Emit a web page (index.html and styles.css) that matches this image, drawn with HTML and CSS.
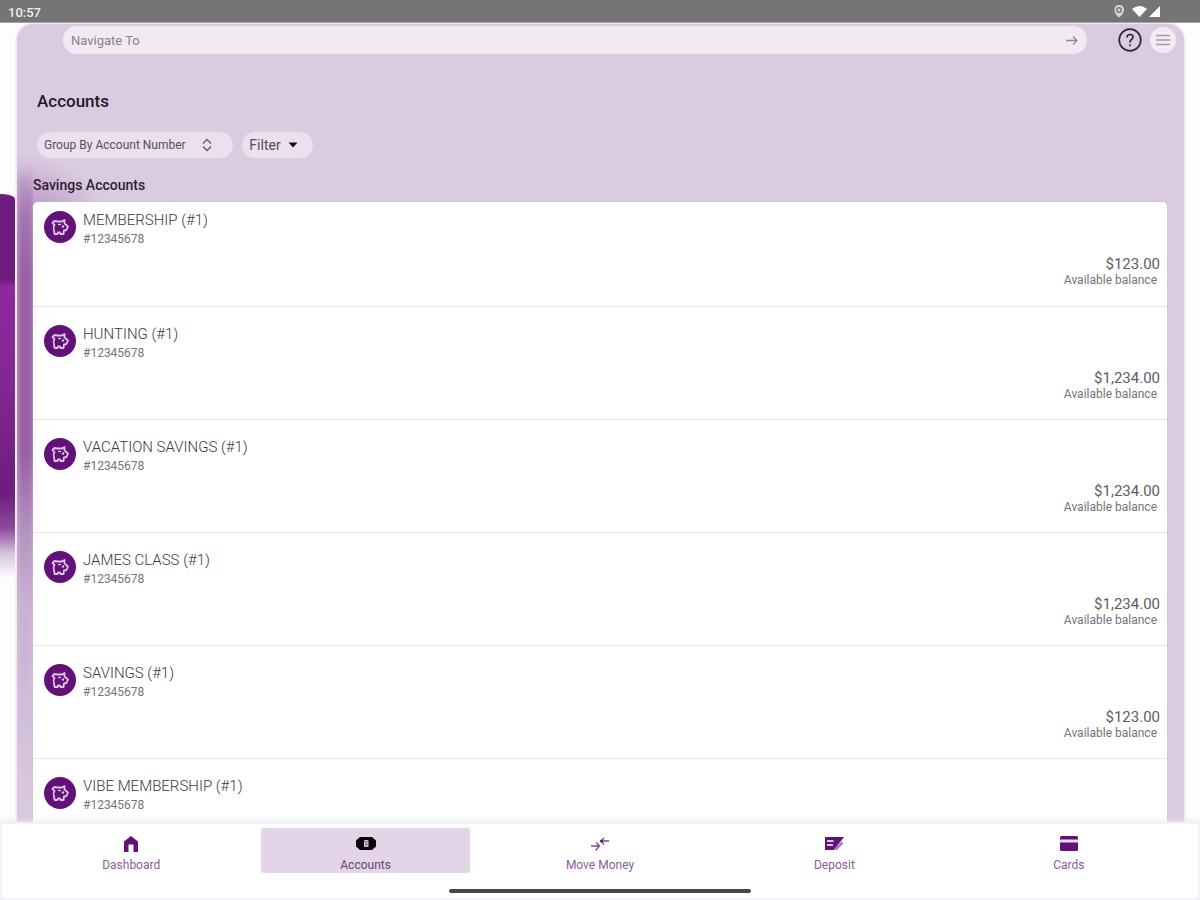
FILE: index.html
```html
<!DOCTYPE html>
<html lang="en">
<head>
<meta charset="utf-8">
<title>Accounts</title>
<link rel="stylesheet" href="styles.css">
</head>
<body>
<svg class="defs" width="0" height="0" aria-hidden="true">
  <symbol id="pig" viewBox="0 0 20 20"><path d="M2.500 6 L4.500 4 L7.500 4.500 L12 4.500 L14.500 3 L14.500 6.500 L18 9.500 L16.500 13 L14 13.500 L13.500 17 L10.500 17 L10 15.500 L8 15.500 L7.500 17 L4.500 17 L4 13 Q2.800 10.500 4.500 8 Z" fill="none" stroke="currentColor" stroke-width="1.800" stroke-linejoin="round"/><path d="M8 7.500 L11 7.500" stroke="currentColor" stroke-width="1.300"/><circle cx="13" cy="9.500" r="1.200" fill="currentColor"/></symbol>
</svg>
<header class="status">
  <time class="clock">10:57</time>
  <svg class="signals" viewBox="0 0 48 16" width="48" height="16" aria-hidden="true">
    <path d="M5 2 Q10 2 10 7 Q9.500 11 5 14.500 Q0.500 11 0.500 7 Q0.500 2 5 2Z" fill="#d6d6d6"/><circle cx="5" cy="7" r="2.200" fill="none" stroke="#777" stroke-width="1.400"/>
    <path d="M18 6 Q25.500 0 33 6 L25.500 14 Z" fill="#fff"/><path d="M35 14 L46 14 L46 3 Z" fill="#fff"/>
  </svg>
</header>
<main class="stage">
  <div class="backdrop"></div>
  <section class="panel">
    <div class="topbar">
      <form class="search">
        <input class="search-input" type="text" placeholder="Navigate To" aria-label="Navigate To">
        <button class="search-go" type="button" aria-label="Go"><svg viewBox="0 0 14 14" width="14" height="14"><path d="M1 7.500 H12 M8 3.500 L12 7.500 L8 11.500" fill="none" stroke="#8d8790" stroke-width="1.300"/></svg></button>
      </form>
      <button class="round" type="button" aria-label="Help"><svg viewBox="0 0 24 24" width="24" height="24"><circle cx="12" cy="12" r="10.800" fill="none" stroke="#33243c" stroke-width="1.700"/><path d="M9 9.500 Q9 6.500 12 6.500 Q15 6.500 15 9 Q15 10.500 13.500 11.500 Q12 12.500 12 14.500" fill="none" stroke="#33243c" stroke-width="1.600"/><circle cx="12" cy="17.300" r="1" fill="#33243c"/></svg></button>
      <button class="round menu" type="button" aria-label="Menu"><svg viewBox="0 0 16 12" width="16" height="12"><path d="M1 1.500 H15 M1 6 H15 M1 10.500 H15" stroke="#a39ca6" stroke-width="1.400"/></svg></button>
    </div>
    <h1 class="title">Accounts</h1>
    <div class="controls">
      <div class="group">
        <select class="group-select" aria-label="Group accounts"><option>Group By Account Number</option></select>
        <svg class="group-icon" viewBox="0 0 12 14" width="12" height="14" aria-hidden="true"><path d="M2 5.500 L6 1.500 L10 5.500 M2 8.500 L6 12.500 L10 8.500" fill="none" stroke="#66586c" stroke-width="1.400"/></svg>
      </div>
      <button class="filter" type="button">Filter <svg viewBox="0 0 10 6" width="10" height="6"><path d="M0.500 0.500 H9.500 L5 5.500 Z" fill="#150a1a"/></svg></button>
    </div>
    <h2 class="subtitle">Savings Accounts</h2>
    <ul class="accounts">
      <li class="account"><span class="badge"><svg width="20" height="20"><use href="#pig"/></svg></span><div class="info"><div class="name">MEMBERSHIP (#1)</div><div class="number">#12345678</div></div><div class="balance"><div class="amount">$123.00</div><div class="note">Available balance</div></div></li>
      <li class="account"><span class="badge"><svg width="20" height="20"><use href="#pig"/></svg></span><div class="info"><div class="name">HUNTING (#1)</div><div class="number">#12345678</div></div><div class="balance"><div class="amount">$1,234.00</div><div class="note">Available balance</div></div></li>
      <li class="account"><span class="badge"><svg width="20" height="20"><use href="#pig"/></svg></span><div class="info"><div class="name">VACATION SAVINGS (#1)</div><div class="number">#12345678</div></div><div class="balance"><div class="amount">$1,234.00</div><div class="note">Available balance</div></div></li>
      <li class="account"><span class="badge"><svg width="20" height="20"><use href="#pig"/></svg></span><div class="info"><div class="name">JAMES CLASS (#1)</div><div class="number">#12345678</div></div><div class="balance"><div class="amount">$1,234.00</div><div class="note">Available balance</div></div></li>
      <li class="account"><span class="badge"><svg width="20" height="20"><use href="#pig"/></svg></span><div class="info"><div class="name">SAVINGS (#1)</div><div class="number">#12345678</div></div><div class="balance"><div class="amount">$123.00</div><div class="note">Available balance</div></div></li>
      <li class="account"><span class="badge"><svg width="20" height="20"><use href="#pig"/></svg></span><div class="info"><div class="name">VIBE MEMBERSHIP (#1)</div><div class="number">#12345678</div></div></li>
    </ul>
  </section>
</main>
<footer class="footer">
  <nav class="tabs">
    <a class="tab" href="#dashboard"><svg viewBox="0 0 20 18" width="20" height="18"><path d="M10 1 L17 6.500 V17 H12.500 V9.500 H7.500 V17 H3 V6.500 Z" fill="currentColor"/></svg><span class="tab-label">Dashboard</span></a>
    <a class="tab active" href="#accounts" aria-current="page"><svg viewBox="0 0 20 18" width="20" height="18"><path d="M4 2 H16 L20 5.500 V11.500 L16 15 H4 L0 11.500 V5.500 Z" fill="#08040a"/><rect x="8" y="5" width="4.500" height="7" rx="1" fill="#c9bdcc"/><path d="M9 7 H11.500 M9 9.500 H11.500" stroke="#4a3f4d" stroke-width="0.800"/></svg><span class="tab-label">Accounts</span></a>
    <a class="tab" href="#move"><svg viewBox="0 0 20 18" width="20" height="18"><path d="M1 11 H9 M6 7.500 L9.500 11 L5.500 15.500" fill="none" stroke="#7b4b8b" stroke-width="1.300"/><path d="M19 6 H11 M14 3 L11 6 L14 9.500" fill="none" stroke="#7b4b8b" stroke-width="1.300"/><circle cx="11.500" cy="6" r="1.500" fill="currentColor"/></svg><span class="tab-label">Move Money</span></a>
    <a class="tab" href="#deposit"><svg viewBox="0 0 20 18" width="20" height="18"><path d="M1 2 H20 L10 15 H1 Z" fill="currentColor"/><path d="M3 6 H9.500 M3 10 H9" stroke="#fff" stroke-width="1.300"/><path d="M11.500 14.500 L18.500 7.500" stroke="#a680b1" stroke-width="2.600"/></svg><span class="tab-label">Deposit</span></a>
    <a class="tab" href="#cards"><svg viewBox="0 0 20 18" width="20" height="18"><rect x="1" y="1" width="18" height="15" rx="1.500" fill="currentColor"/><rect x="1" y="4.500" width="18" height="3" fill="#e9dbee"/></svg><span class="tab-label">Cards</span></a>
  </nav>
  <div class="handle"></div>
</footer>
</body>
</html>
```
FILE: styles.css
```css
* { box-sizing: border-box; }
body {
  margin: 0;
  height: 100vh;
  display: flex;
  flex-direction: column;
  overflow: hidden;
  background: #fdfcfe;
  color: #55505a;
  font-family: Roboto, "Liberation Sans", sans-serif;
}
button, input, select { font: inherit; color: inherit; border: 0; margin: 0; }
button { display: flex; align-items: center; justify-content: center; padding: 0; background: none; }
.defs { position: absolute; }
.status {
  flex: none;
  display: flex;
  align-items: center;
  justify-content: space-between;
  height: 23px;
  padding: 0 38px 0 8px;
  background: #757575;
  color: #eee;
  border-bottom: 1px solid #a5a3a6;
}
.clock { font-size: 13px; font-weight: 500; padding-top: 2px; }
.stage {
  position: relative;
  flex: 1;
  min-height: 0;
  overflow: hidden;
  padding: 1px 16px 0 17px;
}
.backdrop {
  position: absolute;
  left: 0;
  top: 171px;
  width: 15px;
  height: 384px;
  border-top-right-radius: 15px 5px;
  background: linear-gradient(#6d1d7d 0, #6d1d7d 86px, #8e289f 92px, #832792 190px, #6d1d7d 300px, #8b4a98 334px, #d8c5dd 360px, rgba(253, 252, 254, 0) 384px);
}
.panel {
  position: relative;
  border-radius: 16px 16px 0 0;
  padding: 2px 8px 0 16px;
  background: radial-gradient(ellipse 90px 70px at 0 200px, rgba(148, 91, 163, 0.6), rgba(148, 91, 163, 0)), #dacbe0;
  box-shadow: 0 0 3px #d5c8da;
}
.panel::before {
  content: "";
  position: absolute;
  left: 0;
  top: 140px;
  width: 16px;
  height: 660px;
  background: linear-gradient(90deg, rgba(218, 203, 224, 0.35), rgba(218, 203, 224, 0) 30%, rgba(218, 203, 224, 0) 70%, rgba(218, 203, 224, 0.15)), linear-gradient(rgba(148, 91, 163, 0) 0, #a273af 60px, #9860a6 110px, #9860a6 290px, #b594c0 370px, #c9b0d1 440px, #d0bad8 520px, #d9c9df 640px);
}
.topbar { display: flex; align-items: center; padding-left: 30px; }
.search {
  flex: 1;
  display: flex;
  align-items: center;
  height: 28px;
  padding: 0 8px;
  margin-right: 30px;
  border-radius: 14px;
  background: #f0ebf2;
}
.search-input { flex: 1; padding: 0; background: none; font-size: 13px; outline: 0; }
.search-input::placeholder { color: #88818b; opacity: 1; }
.round { width: 26px; height: 26px; border-radius: 50%; }
.menu { margin-left: 7px; background: #f1ebf3; }
.title { margin: 36px 0 0 4px; font-size: 17px; line-height: 22px; font-weight: 500; color: #24162b; }
.controls { display: flex; align-items: center; gap: 9px; margin: 20px 0 0 4px; font-size: 12px; }
.group { position: relative; flex: none; }
.group-select {
  appearance: none;
  display: block;
  width: 196px;
  height: 26px;
  padding: 0 32px 0 7px;
  border-radius: 13px;
  background: #eae0ee;
}
.group-icon { position: absolute; right: 20px; top: 6px; }
.filter { gap: 7px; width: 71px; height: 26px; padding-right: 8px; border-radius: 13px; background: #eae0ee; font-size: 14px; }
.subtitle { position: relative; margin: 19px 0 9px; font-size: 14px; line-height: 16px; font-weight: 500; color: #2c1e33; }
.accounts {
  position: relative;
  list-style: none;
  margin: 0 9px 0 0;
  padding: 0;
  border-radius: 5px 5px 0 0;
  background: #fff;
  box-shadow: 0 0 2px #c7b5ce;
}
.account {
  display: grid;
  grid-template-columns: 32px 1fr auto;
  column-gap: 7px;
  height: 113px;
  padding: 18px 7px 0 11px;
  border-top: 1px solid #e9e7ea;
}
.account:first-child { height: 104px; padding-top: 9px; border-top: 0; }
.balance { margin-top: 44px; text-align: right; }
.badge {
  display: flex;
  align-items: center;
  justify-content: center;
  width: 32px;
  height: 32px;
  border-radius: 50%;
  background: #62107a;
  color: #dcc8e2;
}
.name { font-size: 15px; line-height: 18px; font-weight: 300; color: #3d3840; }
.number { margin-top: 2px; font-size: 12px; line-height: 16px; color: #77717a; }
.amount { font-size: 15px; line-height: 18px; color: #615c64; }
.note { padding-right: 3px; font-size: 12px; line-height: 15px; color: #77717a; }
.footer {
  position: relative;
  flex: none;
  height: 78px;
  padding: 4px 12px 0;
  border: 2px solid #f3f2f6;
  background: #fff;
  box-shadow: 0 -1px 5px #e8e6ee;
}
.tabs { display: grid; grid-template-columns: repeat(5, 1fr); }
.tab {
  display: flex;
  flex-direction: column;
  align-items: center;
  gap: 5px;
  height: 45px;
  margin: 0 13px;
  padding-top: 7px;
  border-radius: 3px;
  font-size: 12px;
  line-height: 15px;
  color: #62107a;
  text-decoration: none;
}
.tab-label { color: #8a5c98; }
.tab.active { background: #e3d4e7; }
.tab.active .tab-label { color: #67496f; }
.handle { width: 302px; height: 4px; margin: 16px auto 0; border-radius: 2px; background: #484848; }
```
